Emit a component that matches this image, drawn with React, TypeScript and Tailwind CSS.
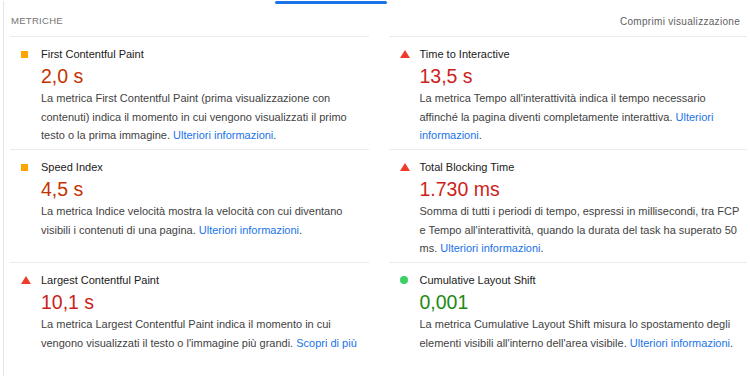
import React from "react";

type Status = "average" | "fail" | "pass";

const metrics: {
  title: string;
  value: string;
  status: Status;
  text: string;
  link: string;
  dot?: boolean;
}[] = [
  {
    title: "First Contentful Paint",
    value: "2,0 s",
    status: "average",
    text: "La metrica First Contentful Paint (prima visualizzazione con contenuti) indica il momento in cui vengono visualizzati il primo testo o la prima immagine.",
    link: "Ulteriori informazioni",
    dot: true,
  },
  {
    title: "Time to Interactive",
    value: "13,5 s",
    status: "fail",
    text: "La metrica Tempo all'interattività indica il tempo necessario affinché la pagina diventi completamente interattiva.",
    link: "Ulteriori informazioni",
    dot: true,
  },
  {
    title: "Speed Index",
    value: "4,5 s",
    status: "average",
    text: "La metrica Indice velocità mostra la velocità con cui diventano visibili i contenuti di una pagina.",
    link: "Ulteriori informazioni",
    dot: true,
  },
  {
    title: "Total Blocking Time",
    value: "1.730 ms",
    status: "fail",
    text: "Somma di tutti i periodi di tempo, espressi in millisecondi, tra FCP e Tempo all'interattività, quando la durata del task ha superato 50 ms.",
    link: "Ulteriori informazioni",
    dot: true,
  },
  {
    title: "Largest Contentful Paint",
    value: "10,1 s",
    status: "fail",
    text: "La metrica Largest Contentful Paint indica il momento in cui vengono visualizzati il testo o l'immagine più grandi.",
    link: "Scopri di più",
  },
  {
    title: "Cumulative Layout Shift",
    value: "0,001",
    status: "pass",
    text: "La metrica Cumulative Layout Shift misura lo spostamento degli elementi visibili all'interno dell'area visibile.",
    link: "Ulteriori informazioni",
    dot: true,
  },
];

function StatusIcon({ status }: { status: Status }) {
  if (status === "average") return <span className="block h-[7px] w-[7px] bg-[#ffa400]" />;
  if (status === "pass") return <span className="block h-[8px] w-[8px] rounded-full bg-[#3ccf62]" />;
  return (
    <svg width="10" height="8" viewBox="0 0 10 8" className="block">
      <polygon points="5,0 10,8 0,8" fill="#ee3b2b" />
    </svg>
  );
}

export default function App() {
  return (
    <div
      className="h-[376px] w-[750px] overflow-hidden bg-white"
      style={{ fontFamily: '"Liberation Sans", Arial, sans-serif' }}
    >
      <div className="ml-[3px] h-full border-l border-[#e4e4e4] pl-[6px] pr-[3px]">
        {/* Tab indicator */}
        <div className="ml-[265px] mt-[1px] h-[3px] w-[112px] rounded-full bg-[#1a73e8]" />

        {/* Header */}
        <div className="flex h-[32px] items-center justify-between pl-[1px] pr-[7px] pt-[2px]">
          <span className="text-[9.5px] uppercase tracking-[0.3px] text-[#757575]">Metriche</span>
          <span className="text-[10px] tracking-[0.3px] text-[#616161]">Comprimi visualizzazione</span>
        </div>

        {/* Metrics grid */}
        <div className="grid auto-rows-fr grid-cols-2 gap-x-[20px]">
          {metrics.map((m) => (
            <div
              key={m.title}
              className="flex border-t border-[#ebebeb] pb-[4.5px] pl-[11px] pr-[6px] pt-[9px]"
            >
              <div className="flex h-4 w-[20px] shrink-0 items-center">
                <StatusIcon status={m.status} />
              </div>
              <div className="min-w-0">
                <div className="text-[11px] leading-4 text-[#212121]">{m.title}</div>
                <div
                  className={
                    "mt-[2px] text-[19.5px] leading-6 " +
                    (m.status === "average"
                      ? "text-[#c33300]"
                      : m.status === "fail"
                      ? "text-[#cc1f1a]"
                      : "text-[#1d8a12]")
                  }
                >
                  {m.value}
                </div>
                <p className="mt-[1px] text-[11px] leading-[18.5px] text-[#424242]">
                  {m.text} <span className="text-[#1a73e8]">{m.link}</span>
                  {m.dot ? "." : ""}
                </p>
              </div>
            </div>
          ))}
        </div>
      </div>
    </div>
  );
}
